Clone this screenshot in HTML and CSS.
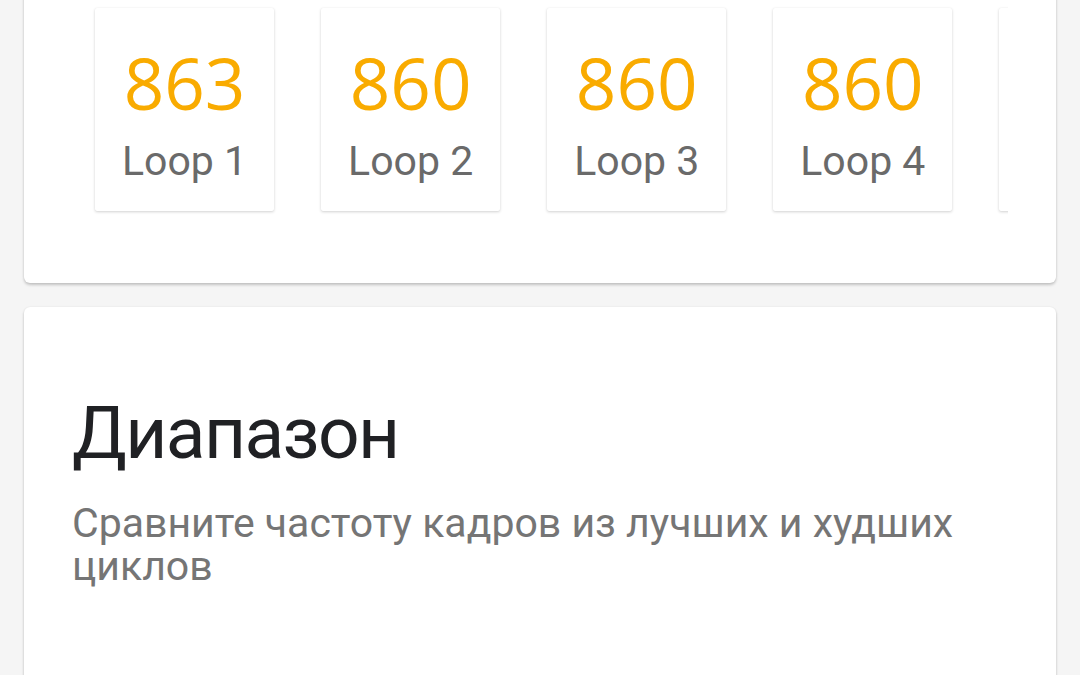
FILE: index.html
```html
<!DOCTYPE html>
<html lang="ru">
<head>
<meta charset="utf-8">
<link rel="stylesheet" href="styles.css">
</head>
<body>
<div class="page">
  <section class="card card-loops">
    <div class="loops">
      <div class="tile"><div class="num">863</div><div class="lbl">Loop 1</div></div>
      <div class="tile"><div class="num">860</div><div class="lbl">Loop 2</div></div>
      <div class="tile"><div class="num">860</div><div class="lbl">Loop 3</div></div>
      <div class="tile"><div class="num">860</div><div class="lbl">Loop 4</div></div>
      <div class="tile"><div class="num">860</div><div class="lbl">Loop 5</div></div>
    </div>
  </section>
  <section class="card card-range">
    <h2 class="title">Диапазон</h2>
    <p class="desc">Сравните частоту кадров из лучших и худших циклов</p>
  </section>
</div>
</body>
</html>
```
FILE: styles.css
```css
html, body {
  margin: 0;
  padding: 0;
  background: #f5f5f5;
  overflow: hidden;
  height: 675px;
}
.page {
  padding: 0 24px;
  display: flex;
  flex-direction: column;
  gap: 24px;
  font-family: Roboto, "Noto Sans", sans-serif;
}
.card {
  background: #fff;
  border-radius: 6px;
  box-shadow: 0 2px 3px rgba(0,0,0,0.2), 0 0 2px rgba(0,0,0,0.08);
}
.card-loops {
  margin-top: -40px;
  padding: 40px 48px 64px;
}
.loops {
  display: flex;
  overflow: hidden;
  padding: 8px 0 8px 23px;
  gap: 47px;
}
.tile {
  flex: none;
  padding: 27px 27px 26px;
  background: #fff;
  border-radius: 2px;
  box-shadow: 0 1px 3px rgba(0,0,0,0.18), 0 0 1px rgba(0,0,0,0.06);
  text-align: center;
}
.num {
  font-family: "Open Sans", Roboto, sans-serif;
  font-size: 71px;
  line-height: 96px;
  color: #f9ab00;
}
.lbl {
  margin-top: 6px;
  font-size: 41px;
  line-height: 48px;
  color: #6a6a6a;
}
.card-range {
  padding: 84px 48px 120px;
}
.title {
  margin: 0;
  font-weight: 400;
  font-size: 73px;
  letter-spacing: -1.6px;
  line-height: 84px;
  color: #202124;
}
.desc {
  margin: 27px 0 0;
  font-size: 41px;
  line-height: 43px;
  color: #757575;
  max-width: 920px;
}
```
